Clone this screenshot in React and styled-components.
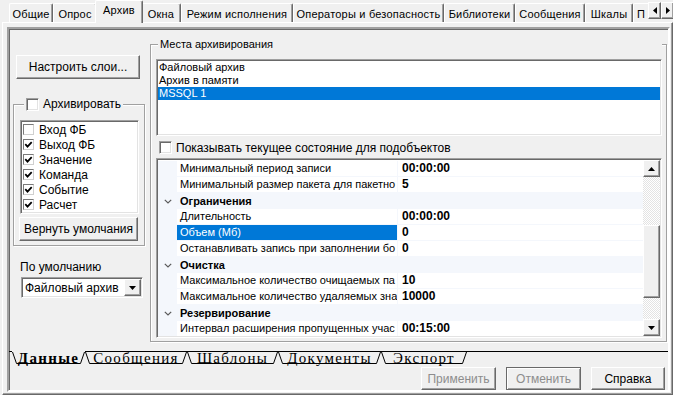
import styled, { createGlobalStyle, css } from 'styled-components';

const GlobalStyle = createGlobalStyle`
  html, body { margin: 0; padding: 0; }
  body {
    background: #f0f0f0;
    font-family: "Liberation Sans", Arial, sans-serif;
    font-size: 11px;
    color: #000;
  }
  * { box-sizing: border-box; }
`;

const raised = css`
  border: 1px solid;
  border-color: #ffffff #696969 #696969 #ffffff;
  box-shadow: inset -1px -1px 0 #a0a0a0;
  background: #f0f0f0;
`;

const sunken = css`
  border: 1px solid;
  border-color: #a0a0a0 #ffffff #ffffff #a0a0a0;
  box-shadow: inset 1px 1px 0 #696969, inset -1px -1px 0 #e3e3e3;
`;

const etched = css`
  border: 1px solid #a0a0a0;
  box-shadow: inset 1px 1px 0 #fff, 1px 1px 0 #fff;
`;

const Window = styled.div`
  width: 673px;
  height: 395px;
  overflow: hidden;
  display: flex;
  flex-direction: column;
  background: #f0f0f0;
`;

/* top tab strip */
const TopTabs = styled.div`
  height: 22px;
  flex: none;
  display: flex;
  align-items: flex-end;
  padding-left: 9px;
`;

const TopTab = styled.div`
  flex: none;
  width: ${p => p.$w}px;
  height: 19px;
  display: flex;
  align-items: center;
  justify-content: center;
  padding-top: 1px;
  font-size: 11px;
  letter-spacing: 0.2px;
  white-space: nowrap;
  overflow: hidden;
  border-top: 1px solid #fff;
  border-left: 1px solid #fff;
  border-right: 1px solid #696969;
  box-shadow: inset -1px 0 0 #a0a0a0;
  border-radius: 2px 2px 0 0;
  ${p => p.$active && css`
    position: relative;
    z-index: 1;
    width: ${p.$w + 4}px;
    height: 23px;
    margin: 0 -2px -1px;
    padding: 0 0 4px;
    background: #f0f0f0;
  `}
  ${p => p.$cut && css`
    border-right: none;
    box-shadow: none;
    border-radius: 2px 0 0 0;
    justify-content: flex-start;
    padding-left: 3px;
  `}
`;

const TabScroller = styled.div`
  flex: none;
  display: flex;
  align-self: flex-start;
  margin-top: 2px;
`;

const SmallBtn = styled.div`
  ${raised}
  width: ${p => p.$w || 13}px;
  height: ${p => p.$h || 17}px;
  flex: none;
  display: flex;
  align-items: center;
  justify-content: center;
`;

const Page = styled.div`
  flex: 1;
  margin-left: 2px;
  border-top: 1px solid #fff;
  border-left: 1px solid #fff;
  border-right: 1px solid #696969;
  border-bottom: 1px solid #696969;
  box-shadow: inset -1px -1px 0 #a0a0a0;
  padding: 4px 2px 2px 4px;
  display: flex;
`;

const Frame = styled.div`
  flex: 1;
  border: 2px solid;
  border-color: #a0a0a0 #fff #fff #a0a0a0;
  box-shadow: inset 1px 1px 0 #696969;
  display: flex;
  flex-direction: column;
`;

const TopArea = styled.div`
  height: 314px;
  flex: none;
  display: flex;
`;

/* left column */
const LeftCol = styled.div`
  width: 141px;
  flex: none;
  display: flex;
  flex-direction: column;
  align-items: flex-start;
`;

const Button = styled.button`
  ${raised}
  font-family: "Liberation Sans", Arial, sans-serif;
  font-size: ${p => p.$fs || 12}px;
  color: ${p => (p.disabled ? '#8d8d8d' : '#000')};
  width: ${p => p.$w}px;
  height: ${p => p.$h || 23}px;
  padding: 0;
  margin: ${p => p.$m || 0};
  flex: none;
  ${p => p.$default && css`
    border-color: #696969;
    box-shadow: inset 1px 1px 0 #fff, inset -1px -1px 0 #a0a0a0;
  `}
`;

const GroupBox = styled.div`
  ${etched}
  display: flex;
  flex-direction: column;
  align-items: flex-start;
`;

const ArchiveGroup = styled(GroupBox)`
  width: 132px;
  margin: 25px 0 0 4px;
  padding: 0 5px 4px 6px;
`;

const Caption = styled.div`
  margin: -7px 0 0 ${p => p.$ml}px;
  padding: 0 2px;
  height: 13px;
  line-height: 13px;
  background: #f0f0f0;
  display: flex;
  align-items: center;
  gap: 4px;
  white-space: nowrap;
  font-size: ${p => p.$fs || 11}px;
`;

const Box = styled.span`
  flex: none;
  display: inline-flex;
  align-items: center;
  justify-content: center;
  width: ${p => p.$size}px;
  height: ${p => p.$size}px;
  background: #fff;
  ${p => (p.$flat
    ? css`border: 1px solid; border-color: #7a7a7a #d0d0d0 #d0d0d0 #7a7a7a;`
    : sunken)}
`;

const CheckList = styled.div`
  ${sunken}
  background: #fff;
  width: 119px;
  height: 94px;
  margin-top: 9px;
  padding: 1px;
`;

const CheckItem = styled.div`
  height: 15px;
  display: flex;
  align-items: center;
  gap: 5px;
  padding-left: 1px;
  font-size: 12px;
`;

const FieldLabel = styled.div`
  margin: 15px 0 0 11px;
  line-height: 13px;
  font-size: 12px;
`;

const Combo = styled.div`
  ${sunken}
  background: #fff;
  width: 122px;
  height: 21px;
  margin: 3px 0 0 12px;
  padding: 1px;
  display: flex;
  align-items: center;
`;

const ComboText = styled.div`
  flex: 1;
  padding-left: 2px;
  font-size: 12px;
`;

/* right group */
const PlacesGroup = styled(GroupBox)`
  flex: 1;
  height: 298px;
  margin: 15px 1px 0 0;
  padding: 0 4px 0 5px;
  align-items: stretch;
`;

const ListBox = styled.div`
  ${sunken}
  background: #fff;
  height: 77px;
  margin-top: 8px;
  padding: 1px;
`;

const ListItem = styled.div`
  height: 13px;
  line-height: 13px;
  padding-left: 1px;
  ${p => p.$selected && css`
    background: #0078d7;
    color: #fff;
  `}
`;

const CheckRow = styled.div`
  display: flex;
  align-items: center;
  gap: 4px;
  height: 13px;
  margin: 5px 0 0 3px;
  font-size: 12px;
`;

const Grid = styled.div`
  ${sunken}
  background: #fff;
  height: 180px;
  margin-top: 4px;
  padding: 1px;
  display: flex;
`;

const GridRows = styled.div`
  flex: 1;
  overflow: hidden;
  padding-top: 1px;
`;

const GridRow = styled.div`
  display: flex;
  height: 16px;
  background: ${p => (p.$cat ? '#f4f7fc' : '#fff')};
`;

const Gutter = styled.div`
  width: 19px;
  flex: none;
  background: #f4f7fc;
  display: flex;
  align-items: center;
  justify-content: center;
`;

const LabelCell = styled.div`
  width: 220px;
  flex: none;
  padding-left: 3px;
  white-space: nowrap;
  overflow: hidden;
  line-height: 15px;
  border-bottom: 1px solid #f4f7fc;
  ${p => p.$selected && css`
    background: #0078d7;
    color: #fff;
  `}
`;

const ValueCell = styled.div`
  flex: 1;
  border-left: 1px solid #f4f7fc;
  border-bottom: 1px solid #f4f7fc;
  padding-left: 4px;
  font-weight: bold;
  font-size: 12px;
  line-height: 15px;
`;

const CatLabel = styled.div`
  flex: 1;
  padding-left: 3px;
  font-weight: bold;
  line-height: 16px;
`;

const ScrollBar = styled.div`
  width: 17px;
  flex: none;
  display: flex;
  flex-direction: column;
`;

const Track = styled.div`
  flex: 1;
  background: repeating-conic-gradient(#ffffff 0 25%, #e3e3e3 0 50%) 0 0 / 2px 2px;
`;

const Thumb = styled.div`
  ${raised}
  height: 73px;
  margin-top: 48px;
`;

/* bottom tab set */
const TabSet = styled.div`
  height: 22px;
  flex: none;
  padding-top: 8px;
  display: flex;
  align-items: flex-start;
`;

const TabLine = styled.div`
  flex: ${p => (p.$fill ? 1 : 'none')};
  width: ${p => p.$w || 0}px;
  border-top: 1px solid #000;
`;

const BottomTab = styled.div`
  position: relative;
  flex: none;
  width: ${p => p.$w}px;
  height: 13px;
  border-top: 1px solid ${p => (p.$active ? 'transparent' : '#000')};
  display: flex;
  justify-content: center;
  font-family: "Liberation Serif", "Times New Roman", serif;
  font-size: 15px;
  letter-spacing: 1.3px;
  line-height: 12px;
  color: #000;
  font-weight: ${p => (p.$active ? 'bold' : 'normal')};
  white-space: nowrap;
`;

const TabOutline = styled.svg`
  position: absolute;
  left: 0;
  top: 0;
  pointer-events: none;
`;

const ButtonRow = styled.div`
  flex: 1;
  display: flex;
  justify-content: flex-end;
  align-items: flex-start;
  gap: 10px;
  padding: 2px 3px 0 0;
`;

/* drawings */
const Tick = () => (
  <svg width="9" height="9" viewBox="0 0 9 9">
    <path d="M1.3 4.2 L3.5 6.6 L7.7 2.2" fill="none" stroke="#000" strokeWidth="1.8" />
  </svg>
);

const Tri = ({ dir }) => {
  if (dir === 'left') {
    return (
      <svg width="4" height="7" viewBox="0 0 4 7"><polygon points="4,0 4,7 0,3.5" fill="#000" /></svg>
    );
  }
  if (dir === 'right') {
    return (
      <svg width="4" height="7" viewBox="0 0 4 7"><polygon points="0,0 0,7 4,3.5" fill="#000" /></svg>
    );
  }
  const pts = dir === 'up' ? '0,4 3.5,0 7,4' : '0,0 7,0 3.5,4';
  return (
    <svg width="7" height="4" viewBox="0 0 7 4"><polygon points={pts} fill="#000" /></svg>
  );
};

const Chevron = () => (
  <svg width="8" height="5" viewBox="0 0 8 5">
    <path d="M0.8 0.8 L4 4 L7.2 0.8" fill="none" stroke="#5a5a5a" strokeWidth="1.2" />
  </svg>
);

const topTabs = [
  { t: 'Общие', w: 44 },
  { t: 'Опрос', w: 44 },
  { t: 'Архив', w: 44, active: true },
  { t: 'Окна', w: 40 },
  { t: 'Режим исполнения', w: 112 },
  { t: 'Операторы и безопасность', w: 151 },
  { t: 'Библиотеки', w: 71 },
  { t: 'Сообщения', w: 70 },
  { t: 'Шкалы', w: 48 },
  { t: 'П', w: 15, cut: true },
];

const kinds = [
  { t: 'Вход ФБ', on: false },
  { t: 'Выход ФБ', on: true },
  { t: 'Значение', on: true },
  { t: 'Команда', on: true },
  { t: 'Событие', on: true },
  { t: 'Расчет', on: true },
];

const places = ['Файловый архив', 'Архив в памяти', 'MSSQL 1'];

// labels are kept as far as the column shows them
const props = [
  { label: 'Минимальный период записи', value: '00:00:00' },
  { label: 'Минимальный размер пакета для пакетно', value: '5' },
  { cat: 'Ограничения' },
  { label: 'Длительность', value: '00:00:00' },
  { label: 'Объем (Мб)', value: '0', selected: true },
  { label: 'Останавливать запись при заполнении бо', value: '0' },
  { cat: 'Очистка' },
  { label: 'Максимальное количество очищаемых па', value: '10' },
  { label: 'Максимальное количество удаляемых зна', value: '10000' },
  { cat: 'Резервирование' },
  { label: 'Интервал расширения пропущенных учас', value: '00:15:00' },
];

const bottomTabs = [
  { t: 'Данные', w: 73, active: true },
  { t: 'Сообщения', w: 102 },
  { t: 'Шаблоны', w: 91 },
  { t: 'Документы', w: 103 },
  { t: 'Экспорт', w: 86 },
];

const App = () => {
  return (
    <Window>
      <GlobalStyle />
      <TopTabs>
        {topTabs.map(tab => (
          <TopTab key={tab.t} $w={tab.w} $active={tab.active} $cut={tab.cut}>{tab.t}</TopTab>
        ))}
        <TabScroller>
          <SmallBtn><Tri dir="left" /></SmallBtn>
          <SmallBtn><Tri dir="right" /></SmallBtn>
        </TabScroller>
      </TopTabs>

      <Page>
        <Frame>
          <TopArea>
            <LeftCol>
              <Button $w={124} $h={24} $m="26px 0 0 7px">Настроить слои...</Button>

              <ArchiveGroup>
                <Caption $ml={4} $fs={12}>
                  <Box $size={13} />
                  <span>Архивировать</span>
                </Caption>
                <CheckList>
                  {kinds.map(k => (
                    <CheckItem key={k.t}>
                      <Box $size={11} $flat>{k.on && <Tick />}</Box>
                      <span>{k.t}</span>
                    </CheckItem>
                  ))}
                </CheckList>
                <Button $w={119} $h={24} $m="3px 0 0 -1px">Вернуть умолчания</Button>
              </ArchiveGroup>

              <FieldLabel>По умолчанию</FieldLabel>
              <Combo>
                <ComboText>Файловый архив</ComboText>
                <SmallBtn $w={17} $h={17}><Tri dir="down" /></SmallBtn>
              </Combo>
            </LeftCol>

            <PlacesGroup>
              <Caption $ml={2}>Места архивирования</Caption>
              <ListBox>
                {places.map(p => (
                  <ListItem key={p} $selected={p === 'MSSQL 1'}>{p}</ListItem>
                ))}
              </ListBox>

              <CheckRow>
                <Box $size={13} />
                <span>Показывать текущее состояние для подобъектов</span>
              </CheckRow>

              <Grid>
                <GridRows>
                  {props.map((r, i) => r.cat ? (
                    <GridRow key={i} $cat>
                      <Gutter><Chevron /></Gutter>
                      <CatLabel>{r.cat}</CatLabel>
                    </GridRow>
                  ) : (
                    <GridRow key={i}>
                      <Gutter />
                      <LabelCell $selected={r.selected}>{r.label}</LabelCell>
                      <ValueCell>{r.value}</ValueCell>
                    </GridRow>
                  ))}
                </GridRows>
                <ScrollBar>
                  <SmallBtn $w={17} $h={17}><Tri dir="up" /></SmallBtn>
                  <Track><Thumb /></Track>
                  <SmallBtn $w={17} $h={17}><Tri dir="down" /></SmallBtn>
                </ScrollBar>
              </Grid>
            </PlacesGroup>
          </TopArea>

          <TabSet>
            <TabLine $w={3} />
            {bottomTabs.map(tab => (
              <BottomTab key={tab.t} $w={tab.w} $active={tab.active}>
                <TabOutline width={tab.w} height="12" viewBox={`0 0 ${tab.w} 12`}>
                  <polyline
                    points={`0.5,0 4.5,11.5 ${tab.w - 4.5},11.5 ${tab.w - 0.5},0`}
                    fill="none"
                    stroke="#000"
                    strokeWidth="1"
                  />
                </TabOutline>
                {tab.t}
              </BottomTab>
            ))}
            <TabLine $fill />
          </TabSet>

          <ButtonRow>
            <Button $w={75} disabled>Применить</Button>
            <Button $w={75} disabled $default>Отменить</Button>
            <Button $w={74}>Справка</Button>
          </ButtonRow>
        </Frame>
      </Page>
    </Window>
  );
};

export default App;
